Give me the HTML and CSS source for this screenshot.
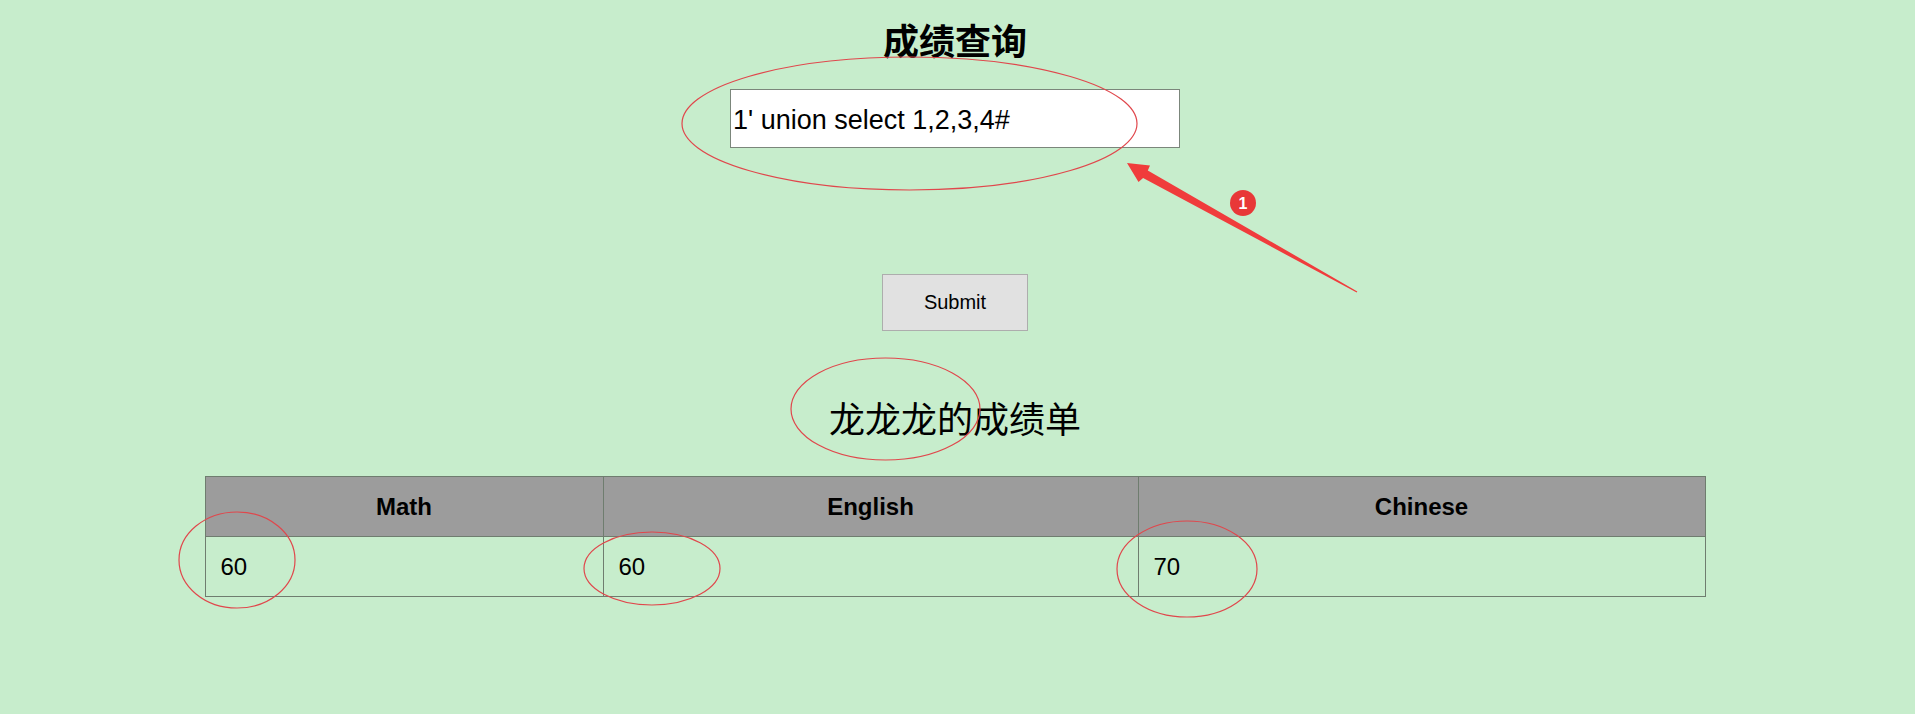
FILE: index.html
```html
<!DOCTYPE html>
<html lang="zh-CN">
<head>
<meta charset="utf-8">
<title>成绩查询</title>
<link rel="stylesheet" href="styles.css">
</head>
<body>
<div class="page">
  <h1 class="title">成绩查询</h1>
  <form class="query">
    <input class="query-input" type="text" value="1' union select 1,2,3,4#">
    <button class="submit" type="button">Submit</button>
  </form>
  <h2 class="report-title">龙龙龙的成绩单</h2>
  <table class="scores">
    <colgroup>
      <col class="col-math">
      <col class="col-english">
      <col class="col-chinese">
    </colgroup>
    <thead>
      <tr><th>Math</th><th>English</th><th>Chinese</th></tr>
    </thead>
    <tbody>
      <tr><td>60</td><td>60</td><td>70</td></tr>
    </tbody>
  </table>
</div>
<svg class="annotations" width="1915" height="714" viewBox="0 0 1915 714" xmlns="http://www.w3.org/2000/svg">
  <g fill="none" stroke="#e0474c" stroke-width="1.2">
    <ellipse cx="909.5" cy="123.5" rx="227.5" ry="66.5"/>
    <ellipse cx="885.5" cy="409" rx="94.5" ry="51"/>
    <ellipse cx="237" cy="560" rx="58" ry="48"/>
    <ellipse cx="652" cy="568.5" rx="68" ry="36.5"/>
    <ellipse cx="1187" cy="569" rx="70" ry="48"/>
  </g>
  <polygon fill="#f03c3c" points="1127,163 1150,165.5 1147.8,170.4 1357.3,291.4 1356.7,292.6 1143.1,177.9 1138.5,182"/>
  <circle cx="1243" cy="203" r="13" fill="#e83838"/>
  <text class="badge-text" x="1243" y="208.5" text-anchor="middle">1</text>
</svg>
</body>
</html>
```
FILE: styles.css
```css
html, body {
  margin: 0;
  padding: 0;
  background: #c7edcc;
}

body {
  width: 1915px;
  height: 714px;
  overflow: hidden;
  position: relative;
  color: #000;
}

.page {
  width: 1910px;
  display: flex;
  flex-direction: column;
  align-items: center;
  padding-top: 17px;
}

.title {
  margin: 0;
  font-family: "Noto Sans CJK SC", sans-serif;
  font-weight: bold;
  font-size: 36px;
  line-height: 44px;
}

.query {
  display: flex;
  flex-direction: column;
  align-items: center;
  margin: 28px 0 0;
}

.query-input {
  width: 450px;
  height: 59px;
  box-sizing: border-box;
  margin: 0;
  padding: 3px 2px 0;
  border: 1px solid #7b867b;
  border-radius: 0;
  background: #fff;
  color: #000;
  font-family: "Liberation Sans", Arial, sans-serif;
  font-size: 27px;
  outline: none;
}

.submit {
  margin: 126px 0 0;
  width: 146px;
  height: 57px;
  box-sizing: border-box;
  padding: 0;
  background: #e1e1e1;
  border: 1px solid #adadad;
  border-radius: 0;
  color: #000;
  font-family: "Liberation Sans", Arial, sans-serif;
  font-size: 20px;
}

.report-title {
  margin: 64px 0 0;
  font-family: "Noto Sans CJK SC", sans-serif;
  font-weight: normal;
  font-size: 36px;
  line-height: 44px;
}

.scores {
  margin-top: 37px;
  width: 1500px;
  border-collapse: collapse;
  table-layout: fixed;
  font-family: "Liberation Sans", Arial, sans-serif;
  font-size: 24px;
}

.col-math { width: 398px; }
.col-english { width: 535px; }
.col-chinese { width: 567px; }

.scores th,
.scores td {
  border: 1px solid #6f7d6f;
  height: 60px;
  padding: 0 15px;
  box-sizing: border-box;
  vertical-align: middle;
}

.scores th {
  background: #9c9c9c;
  font-weight: bold;
  text-align: center;
}

.scores td {
  text-align: left;
}

.annotations {
  position: absolute;
  top: 0;
  left: 0;
  pointer-events: none;
}

.badge-text {
  fill: #fff;
  font-family: "Liberation Sans", Arial, sans-serif;
  font-size: 16px;
  font-weight: bold;
}
```
